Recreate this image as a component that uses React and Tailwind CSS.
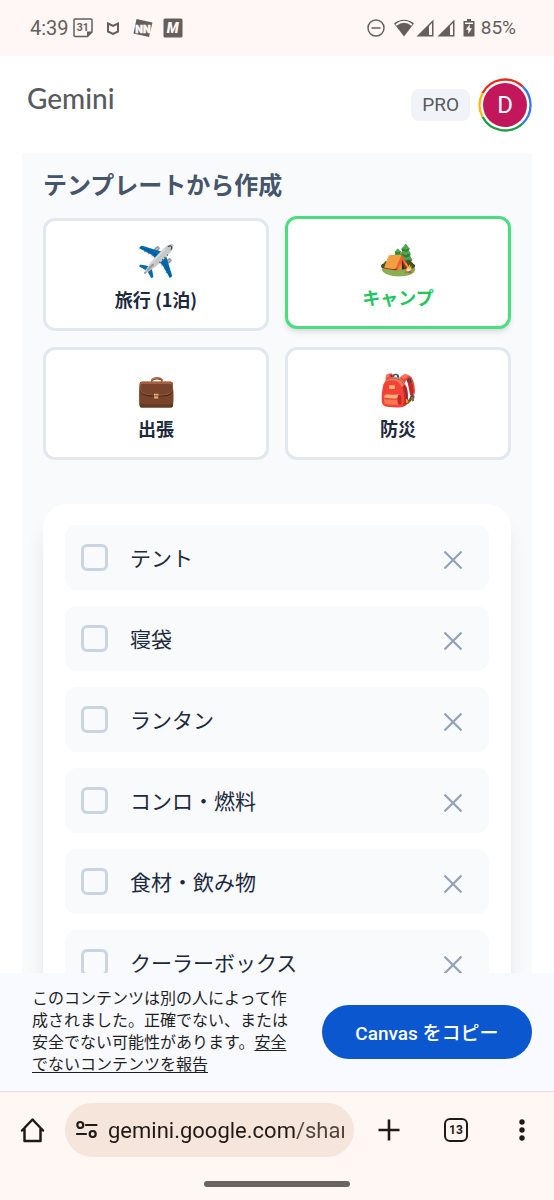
import { useState } from "react";

const templates = [
  { id: "travel", icon: "✈️", label: "旅行 (1泊)" },
  { id: "camp", icon: "🏕️", label: "キャンプ" },
  { id: "business", icon: "💼", label: "出張" },
  { id: "disaster", icon: "🎒", label: "防災" },
];

const initialItems = ["テント", "寝袋", "ランタン", "コンロ・燃料", "食材・飲み物", "クーラーボックス"];

function StatusBar() {
  return (
    <div className="flex h-14 shrink-0 items-center justify-between bg-[#fff7f5] pl-[30px] pr-[38px] text-[#655f5c]">
      <div className="flex items-center">
        <span className="text-xl leading-6">4:39</span>
        <svg className="ml-1 h-5 w-5" viewBox="0 0 20 20" fill="none" aria-hidden="true">
          <path d="M2 1h16a1 1 0 0 1 1 1v12l-4.500 4.500H2a1 1 0 0 1-1-1V2a1 1 0 0 1 1-1z" stroke="currentColor" strokeWidth="1.500" />
          <path d="M19 13.500h-5v5z" fill="currentColor" />
          <text x="9.700" y="13" textAnchor="middle" fontSize="10.500" fontWeight="700" fill="currentColor">31</text>
        </svg>
        <svg className="ml-3 h-4 w-4" viewBox="0 0 16 16" fill="none" aria-hidden="true">
          <path d="M3 3.500 8 6l5-2.500v8L8 13.800l-5-2.300z" stroke="currentColor" strokeWidth="2" />
        </svg>
        <svg className="ml-3 h-5 w-5" viewBox="0 0 20 20" aria-hidden="true">
          <path d="M3.500 1 19.500 4.500 16 19 .5 15.500z" fill="currentColor" />
          <text x="10" y="14.500" textAnchor="middle" fontSize="11" fontWeight="900" fill="#fff7f5" stroke="#fff7f5" strokeWidth=".5">NN</text>
        </svg>
        <svg className="ml-2.5 h-5 w-5" viewBox="0 0 20 20" aria-hidden="true">
          <rect x=".5" y=".5" width="19" height="19" rx="1.500" fill="currentColor" />
          <text x="9.700" y="15" textAnchor="middle" fontSize="14" fontWeight="900" fontStyle="italic" fill="#fff7f5">M</text>
        </svg>
      </div>
      <div className="flex items-center">
        <svg className="h-[18px] w-[18px]" viewBox="0 0 18 18" fill="none" stroke="currentColor" strokeWidth="1.500" aria-hidden="true">
          <circle cx="9" cy="9" r="8" />
          <path d="M4.500 9h9" />
        </svg>
        <svg className="ml-2 h-5 w-[22px]" viewBox="0 0 22 20" aria-hidden="true">
          <path d="M11 18.500 1 5.500C7 .500 15 .500 21 5.500z" fill="currentColor" />
          <path d="M3 7C8 3 14 3 19 7" fill="none" stroke="#fff7f5" strokeWidth="1.800" />
        </svg>
        <div className="ml-px flex gap-[3px]">
          {[0, 1].map((n) => (
            <svg key={n} className="h-[18px] w-[18px]" viewBox="0 0 18 18" aria-hidden="true">
              <path d="M0.500 17.500 17.500.500v17z" fill="currentColor" />
              <path d="M13 7v9h3V4z" fill="#fff7f5" />
            </svg>
          ))}
        </div>
        <svg className="ml-2 h-[18px] w-3" viewBox="0 0 12 18" aria-hidden="true">
          <path d="M4 0h4v2h3.500v15.500H.500V2H4z" fill="currentColor" />
          <path d="M2 3.500h8v1.500H2z" fill="#fff7f5" />
          <path d="M6.700 5 3 10.800h2.300V15L9 9.300H6.700z" fill="#fff7f5" />
        </svg>
        <span className="ml-1.5 text-[19px] leading-6">85%</span>
      </div>
    </div>
  );
}

function Header() {
  return (
    <header className="flex h-[97px] shrink-0 items-center justify-between bg-white pl-[27px] pr-[22px]">
      <h1 className="pb-3.5 font-[Lato,sans-serif] text-[28px] leading-8 font-medium text-[#575b5f]">Gemini</h1>
      <div className="flex items-center gap-2">
        <span className="rounded-lg bg-[#f0f4f9] px-[11px] text-[19px] leading-8 text-[#575b5f]">PRO</span>
        <button type="button" aria-label="アカウント" className="relative grid h-[54px] w-[54px] place-items-center rounded-full">
          <svg className="absolute inset-0 h-full w-full" viewBox="0 0 54 54" fill="none" strokeWidth="2.300" aria-hidden="true">
            <path d="M4.500 15.300A25.500 25.500 0 0 1 44.500 8.400" stroke="#ea2a18" />
            <path d="M44.500 8.400A25.500 25.500 0 0 1 44.500 45.600" stroke="#3078f0" />
            <path d="M44.500 45.600A25.500 25.500 0 0 1 4.500 38.700" stroke="#1e9e44" />
            <path d="M4.500 38.700A25.500 25.500 0 0 1 4.500 15.300" stroke="#fbb80b" />
          </svg>
          <span className="relative grid h-11 w-11 place-items-center rounded-full bg-[#c2185b] text-2xl text-white">D</span>
        </button>
      </div>
    </header>
  );
}

function TemplateCard({ template, selected, onSelect }) {
  return (
    <button
      type="button"
      aria-pressed={selected}
      onClick={onSelect}
      className={`flex h-[113px] flex-col items-center justify-center rounded-xl border-3 bg-white pt-2 text-lg font-bold ${
        selected
          ? "-translate-y-0.5 border-[#4ade80] text-[#22c55e] shadow-md"
          : "border-slate-200 text-slate-800"
      }`}
    >
      <span className="text-[31px] leading-9" aria-hidden="true">{template.icon}</span>
      <span className="pt-1 leading-9">{template.label}</span>
    </button>
  );
}

function PackingItem({ id, label, checked, onToggle, onRemove }) {
  return (
    <li className="flex h-[65px] items-center rounded-xl bg-slate-50 px-4">
      <input
        id={id}
        type="checkbox"
        checked={checked}
        onChange={onToggle}
        className="h-[27px] w-[27px] shrink-0 appearance-none rounded-md border-3 border-slate-300 checked:border-green-500 checked:bg-green-500"
      />
      <label htmlFor={id} className="ml-[22px] flex-1 pb-0.5 text-[21px] leading-8 text-slate-800">{label}</label>
      <button type="button" onClick={onRemove} aria-label={`${label}を削除`} className="grid h-10 w-10 place-items-center pt-1 text-[#94a3b8]">
        <svg className="h-[18px] w-[18px]" viewBox="0 0 18 18" fill="none" stroke="currentColor" strokeWidth="2.300" strokeLinecap="round" aria-hidden="true">
          <path d="M1.200 1.200l15.600 15.600M16.800 1.200 1.200 16.800" />
        </svg>
      </button>
    </li>
  );
}

function Notice() {
  return (
    <aside className="flex h-[118px] shrink-0 items-center justify-between gap-6 bg-[#f8faff] pl-8 pr-[22px]">
      <p className="w-[262px] text-base leading-[22px] text-[#1f1f1f]">
        このコンテンツは別の人によって作成されました。正確でない、または安全でない可能性があります。
        <a href="#report" className="underline underline-offset-2">安全でないコンテンツを報告</a>
      </p>
      <button type="button" className="h-[54px] max-w-[210px] flex-1 rounded-full bg-[#0b57d0] pt-1 text-[19px] font-medium text-white">
        Canvas をコピー
      </button>
    </aside>
  );
}

function BrowserBar() {
  const [url, setUrl] = useState("gemini.google.com/share");
  return (
    <footer className="shrink-0 border-t border-[#ecdcd8] bg-[#fff7f4] text-[#1f1a17]">
      <div className="flex items-center pl-5 pr-[22px] pt-[11px]">
        <button type="button" aria-label="ホーム">
          <svg className="h-[26px] w-[26px]" viewBox="0 0 26 26" fill="none" stroke="currentColor" strokeWidth="2.500" strokeLinecap="round" strokeLinejoin="round" aria-hidden="true">
            <path d="M2 13.500 12.500 2.500 23 13.500M4.500 11v13h16V11" />
          </svg>
        </button>
        <div className="ml-[19px] flex h-[54px] min-w-0 flex-1 items-center rounded-full bg-[#f5e5db] pl-[11px] pr-2.5">
          <svg className="h-5 w-[22px] shrink-0" viewBox="0 0 22 20" fill="none" stroke="currentColor" strokeWidth="2.200" aria-hidden="true">
            <circle cx="4.300" cy="5" r="3" />
            <path d="M10 5h10.500M1 14h9" strokeLinecap="round" />
            <circle cx="16.700" cy="14" r="3" />
          </svg>
          <input
            type="text"
            aria-label="アドレスバー"
            value={url}
            onChange={(event) => setUrl(event.target.value)}
            className="ml-2.5 w-full min-w-0 bg-[linear-gradient(90deg,#1f1a17_188px,#51443b_188px)] bg-clip-text pt-0.5 text-[22px] leading-8 text-transparent caret-[#1f1a17] outline-none"
          />
        </div>
        <button type="button" aria-label="新しいタブ" className="ml-6">
          <svg className="h-[22px] w-[22px]" viewBox="0 0 22 22" fill="none" stroke="currentColor" strokeWidth="2.600" aria-hidden="true">
            <path d="M11 .500v21M.500 11h21" />
          </svg>
        </button>
        <button type="button" aria-label="タブを切り替え" className="ml-11 grid h-6 w-6 place-items-center rounded-md border-[2px] border-current text-xs font-bold leading-none">
          13
        </button>
        <button type="button" aria-label="メニュー" className="ml-11">
          <svg className="h-6 w-5" viewBox="0 0 20 24" fill="currentColor" aria-hidden="true">
            <circle cx="10" cy="4" r="2.700" />
            <circle cx="10" cy="12" r="2.700" />
            <circle cx="10" cy="20" r="2.700" />
          </svg>
        </button>
      </div>
      <div className="mx-auto mb-[13px] mt-6 h-1.5 w-[146px] rounded-full bg-[#6b6461]" />
    </footer>
  );
}

export default function App() {
  const [selected, setSelected] = useState("camp");
  const [items, setItems] = useState(initialItems);
  const [checked, setChecked] = useState({});

  return (
    <div lang="ja" className="flex h-dvh flex-col bg-white font-[Roboto,'Noto_Sans_CJK_JP',sans-serif]">
      <StatusBar />
      <Header />
      <main className="min-h-0 flex-1 overflow-y-auto px-[22px] [scrollbar-width:none]">
        <div className="overflow-hidden bg-slate-50 px-[21px] pb-6 pt-[15px] font-['Noto_Sans_CJK_JP',sans-serif]">
          <h2 className="text-2xl leading-8 font-bold text-slate-600">テンプレートから作成</h2>
          <div className="mt-[18px] grid grid-cols-2 gap-4">
            {templates.map((template) => (
              <TemplateCard
                key={template.id}
                template={template}
                selected={template.id === selected}
                onSelect={() => setSelected(template.id)}
              />
            ))}
          </div>
          <ul className="mt-11 flex flex-col gap-4 rounded-3xl bg-white p-[22px] pt-[21px] shadow-xl">
            {items.map((item) => (
              <PackingItem
                key={item}
                id={`item-${item}`}
                label={item}
                checked={Boolean(checked[item])}
                onToggle={() => setChecked({ ...checked, [item]: !checked[item] })}
                onRemove={() => setItems(items.filter((other) => other !== item))}
              />
            ))}
          </ul>
        </div>
      </main>
      <Notice />
      <BrowserBar />
    </div>
  );
}
